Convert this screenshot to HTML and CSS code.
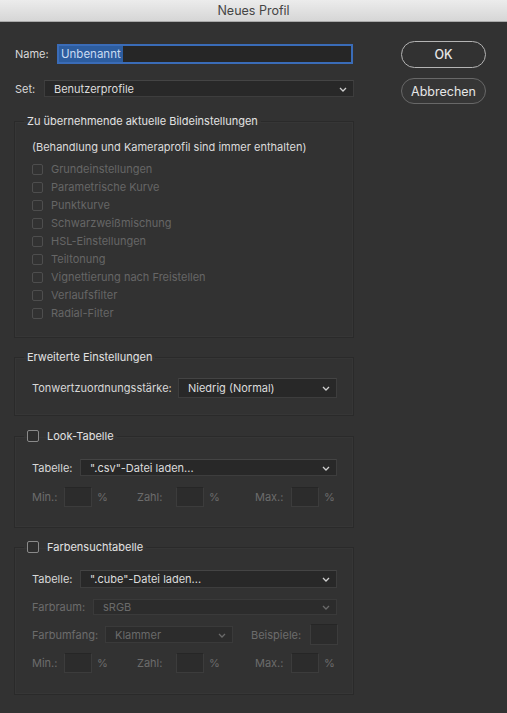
FILE: index.html
```html
<!DOCTYPE html>
<html lang="de">
<head>
<meta charset="utf-8">
<title>Neues Profil</title>
<link rel="stylesheet" href="styles.css">
</head>
<body>
<div class="window">
  <div class="titlebar">Neues Profil</div>
  <div class="content">
    <div class="main">
      <div class="row row-name">
        <span class="lbl lbl-name">Name:</span>
        <div class="textfield"><span class="sel">Unbenannt</span></div>
      </div>
      <div class="row row-set">
        <span class="lbl lbl-set">Set:</span>
        <div class="select grow"><span>Benutzerprofile</span><svg class="chev" viewBox="0 0 8 5"><path d="M1 1 L4 4 L7 1"/></svg></div>
      </div>

      <fieldset class="group g1">
        <legend>Zu übernehmende aktuelle Bildeinstellungen</legend>
        <div class="note">(Behandlung und Kameraprofil sind immer enthalten)</div>
        <div class="checks">
          <div class="check disabled"><span class="box"></span>Grundeinstellungen</div>
          <div class="check disabled"><span class="box"></span>Parametrische Kurve</div>
          <div class="check disabled"><span class="box"></span>Punktkurve</div>
          <div class="check disabled"><span class="box"></span>Schwarzweißmischung</div>
          <div class="check disabled"><span class="box"></span>HSL-Einstellungen</div>
          <div class="check disabled"><span class="box"></span>Teiltonung</div>
          <div class="check disabled"><span class="box"></span>Vignettierung nach Freistellen</div>
          <div class="check disabled"><span class="box"></span>Verlaufsfilter</div>
          <div class="check disabled"><span class="box"></span>Radial-Filter</div>
        </div>
      </fieldset>

      <fieldset class="group g2">
        <legend>Erweiterte Einstellungen</legend>
        <div class="row row-tonwert">
          <span class="lbl lbl-tonwert">Tonwertzuordnungsstärke:</span>
          <div class="select grow tall"><span>Niedrig (Normal)</span><svg class="chev" viewBox="0 0 8 5"><path d="M1 1 L4 4 L7 1"/></svg></div>
        </div>
      </fieldset>

      <fieldset class="group g3">
        <legend class="check-legend"><span class="box active"></span>Look-Tabelle</legend>
        <div class="row row-tabelle">
          <span class="lbl lbl-tabelle">Tabelle:</span>
          <div class="select grow"><span>".csv"-Datei laden...</span><svg class="chev" viewBox="0 0 8 5"><path d="M1 1 L4 4 L7 1"/></svg></div>
        </div>
        <div class="row row-amount">
          <div class="amt amt-min"><span class="lbl dim lbl-min">Min.:</span><span class="num"></span><span class="pct dim">%</span></div>
          <div class="amt amt-zahl"><span class="lbl dim lbl-zahl">Zahl:</span><span class="num"></span><span class="pct dim">%</span></div>
          <div class="amt"><span class="lbl dim lbl-max">Max.:</span><span class="num"></span><span class="pct dim">%</span></div>
        </div>
      </fieldset>

      <fieldset class="group g4">
        <legend class="check-legend"><span class="box active"></span>Farbensuchtabelle</legend>
        <div class="row row-tabelle2">
          <span class="lbl lbl-tabelle">Tabelle:</span>
          <div class="select grow h18"><span>".cube"-Datei laden...</span><svg class="chev" viewBox="0 0 8 5"><path d="M1 1 L4 4 L7 1"/></svg></div>
        </div>
        <div class="row row-farbraum">
          <span class="lbl dim lbl-farbraum">Farbraum:</span>
          <div class="select grow h16 disabled"><span>sRGB</span><svg class="chev" viewBox="0 0 8 5"><path d="M1 1 L4 4 L7 1"/></svg></div>
        </div>
        <div class="row row-umfang">
          <span class="lbl dim lbl-umfang">Farbumfang:</span>
          <div class="select disabled umfang"><span>Klammer</span><svg class="chev" viewBox="0 0 8 5"><path d="M1 1 L4 4 L7 1"/></svg></div>
          <span class="lbl dim lbl-beispiele">Beispiele:</span>
          <span class="num big"></span>
        </div>
        <div class="row row-amount2">
          <div class="amt amt-min"><span class="lbl dim lbl-min">Min.:</span><span class="num"></span><span class="pct dim">%</span></div>
          <div class="amt amt-zahl"><span class="lbl dim lbl-zahl">Zahl:</span><span class="num"></span><span class="pct dim">%</span></div>
          <div class="amt"><span class="lbl dim lbl-max">Max.:</span><span class="num"></span><span class="pct dim">%</span></div>
        </div>
      </fieldset>
    </div>

    <div class="buttons">
      <button class="btn btn-ok">OK</button>
      <button class="btn btn-cancel">Abbrechen</button>
    </div>
  </div>
</div>
</body>
</html>
```

FILE: styles.css
```css
* { box-sizing: border-box; }

html, body {
  margin: 0;
  padding: 0;
  background: #323232;
}

body {
  font-family: "Inter", "Liberation Sans", sans-serif;
  font-size: 11px;
  color: #d8d8d8;
  width: 507px;
  height: 713px;
  overflow: hidden;
}

.window {
  width: 507px;
  height: 713px;
  background: #323232;
}

.titlebar {
  height: 22px;
  line-height: 22px;
  text-align: center;
  font-size: 12.5px;
  color: #454545;
  background: linear-gradient(#ececec, #d6d6d6);
  border-bottom: 1px solid #a9a9a9;
}

.content {
  display: flex;
  padding: 19px 0 0 14px;
}

.main {
  width: 340px;
  padding-top: 3px;
}

.buttons {
  margin-left: 47px;
  display: flex;
  flex-direction: column;
  gap: 10px;
}

.btn {
  width: 85px;
  border-radius: 14px;
  background: #323232;
  color: #e6e6e6;
  font-family: inherit;
  font-size: 12.5px;
  padding: 0;
}

.btn-ok {
  height: 27px;
  border: 1.5px solid #b4b4b4;
  font-weight: 500;
}

.btn-cancel {
  height: 26px;
  border: 1px solid #686868;
  background: #363636;
}

.row {
  display: flex;
  align-items: center;
}

.lbl {
  flex: none;
  color: #d8d8d8;
  white-space: nowrap;
}

.dim { color: #6c6c6c; }

.grow { flex: 1; }

.row-name { height: 20px; }
.lbl-name { width: 43px; padding-left: 1px; }

.textfield {
  width: 296px;
  height: 20px;
  background: #262626;
  border: 2px solid #3a6cb8;
  padding-left: 0;
  display: flex;
  align-items: center;
}

.textfield .sel {
  background: #2d5d9f;
  color: #c9daf2;
  line-height: 16px;
  padding: 0 2px;
  font-size: 11.5px;
}

.row-set { height: 17px; margin-top: 16px; }
.lbl-set { width: 30px; padding-left: 1px; }

.select {
  position: relative;
  height: 17px;
  background: #282828;
  border: 1px solid #3d3d3d;
  border-top-color: #444;
  display: flex;
  align-items: center;
  padding-left: 9px;
  color: #dcdcdc;
}

.select.tall { height: 20px; }
.select.h18 { height: 18px; }
.select.h16 { height: 16px; }

.select.disabled {
  background: #2c2c2c;
  border-color: #3a3a3a;
  color: #6a6a6a;
}

.chev {
  position: absolute;
  right: 6px;
  top: 50%;
  width: 8px;
  height: 5px;
  margin-top: -2px;
  fill: none;
  stroke: #cfcfcf;
  stroke-width: 1.3;
}

.select.disabled .chev { stroke: #6a6a6a; }

/* groups */
.group {
  margin: 0;
  min-width: 0;
  border: 1px solid #2a2a2a;
  box-shadow: inset 0 0 0 1px #363636;
  padding: 0 16px 0 17px;
}

.group legend {
  line-height: 16px;
  padding: 0 3px;
  margin-left: -8px;
  color: #e2e2e2;
}

.g1 { margin-top: 16px; padding-top: 9px; padding-bottom: 15px; }

.note { line-height: 18px; color: #dcdcdc; margin-bottom: 4px; }

.check {
  height: 18px;
  display: flex;
  align-items: center;
  color: #d8d8d8;
}

.check.disabled { color: #666; }

.box {
  flex: none;
  width: 11px;
  height: 11px;
  border: 1px solid #4e4e4e;
  border-radius: 2px;
  margin-right: 8px;
}

.box.active {
  width: 12px;
  height: 12px;
  border-color: #8a8a8a;
  background: #2e2e2e;
  margin-right: 8px;
}

.check-legend {
  display: flex;
  align-items: center;
}

.g2 { margin-top: 11px; padding-top: 13px; padding-bottom: 17px; }
.row-tonwert { height: 20px; }
.lbl-tonwert { width: 146px; }

.g3 { margin-top: 12px; padding-top: 15px; padding-bottom: 20px; }
.row-tabelle { height: 17px; }
.lbl-tabelle { width: 48px; }

.row-amount, .row-amount2 {
  height: 20px;
}
.row-amount { margin-top: 11px; }

.amt {
  display: flex;
  align-items: center;
}

.amt-min { width: 105px; }
.amt-zahl { width: 118px; }

.lbl-min { width: 32px; }
.lbl-zahl { width: 39px; }
.lbl-max { width: 36px; }

.num {
  flex: none;
  width: 28px;
  height: 20px;
  background: #2c2c2c;
  border: 1px solid #3c3c3c;
  border-top-color: #262626;
}

.num.big { width: 28px; height: 21px; margin-right: -2px; }

.pct { margin-left: 5px; }

.g4 { margin-top: 11px; padding-top: 15px; padding-bottom: 21px; }
.row-tabelle2 { height: 18px; }
.row-farbraum { height: 16px; margin-top: 11px; }
.lbl-farbraum { width: 61px; }
.row-umfang { height: 21px; margin-top: 9px; }
.lbl-umfang { width: 73px; }
.select.umfang { width: 128px; height: 17px; }
.lbl-beispiele { width: 59px; margin-left: 18px; }
.row-amount2 { margin-top: 8px; }
```
